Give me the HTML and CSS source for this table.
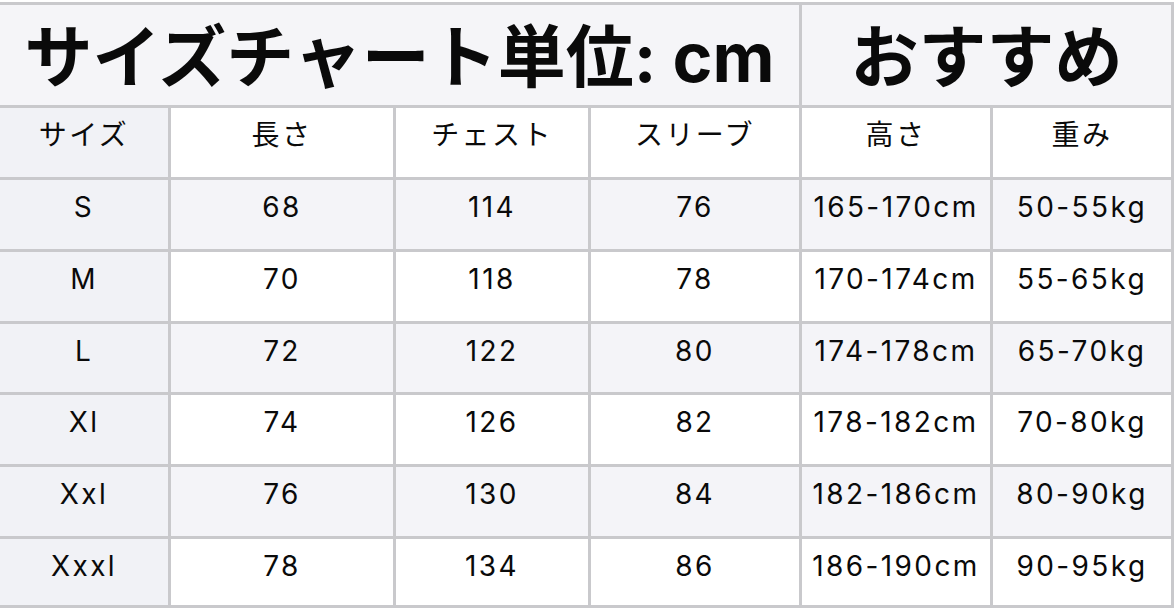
FILE: index.html
```html
<!DOCTYPE html>
<html lang="ja">
<head>
<meta charset="utf-8">
<title>サイズチャート</title>
<link rel="stylesheet" href="styles.css">
</head>
<body>
<div class="chart">
  <div class="title span4">サイズチャート単位: cm</div>
  <div class="title span2">おすすめ</div>

  <div class="cell key">サイズ</div>
  <div class="cell">長さ</div>
  <div class="cell">チェスト</div>
  <div class="cell">スリーブ</div>
  <div class="cell">高さ</div>
  <div class="cell">重み</div>

  <div class="cell key">S</div>
  <div class="cell alt">68</div>
  <div class="cell alt">114</div>
  <div class="cell alt">76</div>
  <div class="cell alt">165-170cm</div>
  <div class="cell alt">50-55kg</div>

  <div class="cell key">M</div>
  <div class="cell">70</div>
  <div class="cell">118</div>
  <div class="cell">78</div>
  <div class="cell">170-174cm</div>
  <div class="cell">55-65kg</div>

  <div class="cell key">L</div>
  <div class="cell alt">72</div>
  <div class="cell alt">122</div>
  <div class="cell alt">80</div>
  <div class="cell alt">174-178cm</div>
  <div class="cell alt">65-70kg</div>

  <div class="cell key">Xl</div>
  <div class="cell">74</div>
  <div class="cell">126</div>
  <div class="cell">82</div>
  <div class="cell">178-182cm</div>
  <div class="cell">70-80kg</div>

  <div class="cell key">Xxl</div>
  <div class="cell alt">76</div>
  <div class="cell alt">130</div>
  <div class="cell alt">84</div>
  <div class="cell alt">182-186cm</div>
  <div class="cell alt">80-90kg</div>

  <div class="cell key">Xxxl</div>
  <div class="cell">78</div>
  <div class="cell">134</div>
  <div class="cell">86</div>
  <div class="cell">186-190cm</div>
  <div class="cell">90-95kg</div>
</div>
</body>
</html>
```

FILE: styles.css
```css
html, body {
  margin: 0;
  padding: 0;
  background: #ffffff;
}

body {
  padding-top: 2px;
  font-family: "Inter", "Noto Sans CJK JP", sans-serif;
  color: #0a0a0a;
}

.chart {
  display: grid;
  grid-template-columns: 168px 222px 192px 208px 188px 178px;
  grid-template-rows: 100px 69px 69px 69px 68px 69px 69px 66px;
  gap: 3px;
  padding: 3px 3px 3px 0;
  width: 1171px;
  background: #c9c9cc;
}

.title {
  display: flex;
  align-items: center;
  justify-content: center;
  padding-bottom: 5px;
  background: #f5f5f8;
  font-family: "Inter", "Noto Sans CJK JP", sans-serif;
  font-weight: 700;
  font-size: 68px;
  letter-spacing: 0;
}

.span4 { grid-column: span 4; }
.span2 { grid-column: span 2; }

.cell {
  background: #ffffff;
  text-align: center;
  font-size: 28px;
  line-height: 34px;
  padding-top: 10px;
  letter-spacing: 2.4px;
}

.cell.alt { background: #f4f4f8; }
.cell.key { background: #f1f2f6; }
```
